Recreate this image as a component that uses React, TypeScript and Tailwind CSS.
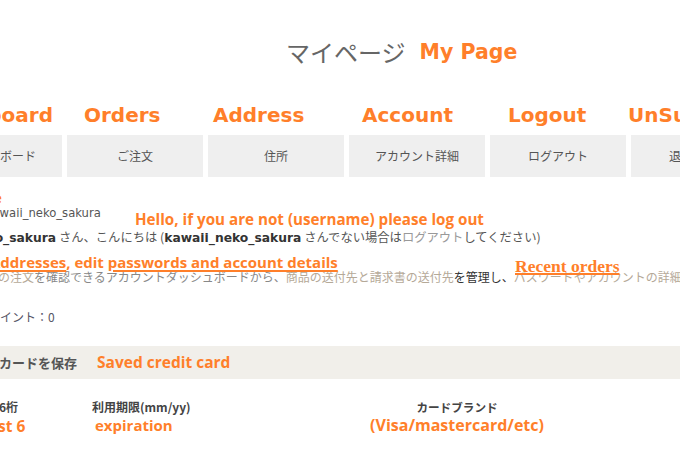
import React from "react";

const tabs = [
  { jp: "ダッシュボード", en: "Dashboard", pad: "pl-[5px]" },
  { jp: "ご注文", en: "Orders", pad: "pl-[17px]" },
  { jp: "住所", en: "Address", pad: "pl-[5px]" },
  { jp: "アカウント詳細", en: "Account", pad: "pl-[13px]" },
  { jp: "ログアウト", en: "Logout", pad: "pl-[18px]" },
  { jp: "退会手続き", en: "UnSubscribe", pad: "pl-0 -ml-[3px]" },
];

const jp = "font-['Noto_Sans_CJK_JP',sans-serif]";
const note = "font-['Open_Sans',sans-serif] font-bold text-[#ff7f2a]";

const App = () => {
  return (
    <div className="relative h-[450px] w-[680px] overflow-hidden bg-white text-[#555]">
      {/* title */}
      <div className="flex h-[90px] items-start pl-[286px] pt-[38px]">
        <span className={`${jp} text-[24px] leading-[28px] text-[#666]`}>マイページ</span>
        <span className="ml-[14px] font-['DejaVu_Sans',sans-serif] text-[20.5px] font-bold leading-[28px] text-[#ff7f2a]">
          My Page
        </span>
      </div>

      {/* tab annotations + tabs */}
      <div className="-ml-[74px] w-[841px]">
        <div className="flex h-[45px] gap-[5px] pt-[13px]">
          {tabs.map((t, i) => (
            <div key={i} className={`w-[136px] shrink-0 whitespace-nowrap ${t.pad}`}>
              <span className="font-['DejaVu_Sans',sans-serif] text-[20px] font-bold leading-[25px] text-[#ff7f2a]">
                {t.en}
              </span>
            </div>
          ))}
        </div>
        <div className="flex h-[42px] gap-[5px]">
          {tabs.map((t, i) => (
            <div
              key={i}
              className={`${jp} flex w-[136px] shrink-0 items-center justify-center bg-[#efefef] text-[12px] text-[#555]`}
            >
              {t.jp}
            </div>
          ))}
        </div>
      </div>

      {/* account dashboard */}
      <div className="relative pt-[12px]">
        <div className={`${note} -ml-[43px] text-[15px] leading-[16px]`}>Name</div>
        <div className="-ml-[14px] whitespace-nowrap font-['DejaVu_Sans',sans-serif] text-[11.6px] leading-[16px] text-[#555]">
          kawaii_neko_sakura
        </div>
        <div className={`${jp} mt-[8px] -ml-[81px] whitespace-nowrap text-[12.3px] leading-[16px] text-[#555]`}>
          <b className="font-['DejaVu_Sans',sans-serif] text-[#333]">kawaii_neko_sakura</b> さん、こんにちは (
          <b className="font-['DejaVu_Sans',sans-serif] text-[#333]">kawaii_neko_sakura</b> さんでない場合は
          <span className="text-[#999]">ログアウト</span>してください)
        </div>
        <div className={`${jp} mt-[23px] -ml-[26px] whitespace-nowrap text-[12px] leading-[16px] text-[#888]`}>
          <span className="text-[#b5a998]">最近の注文</span>を確認できるアカウントダッシュボードから、
          <span className="text-[#b5a998]">商品の送付先と請求書の送付先</span>
          <span className="text-[#333]">を管理し、</span>
          <span className="text-[#b5a998]">パスワードやアカウントの詳細</span>を編集できます。
        </div>
        <div className={`${jp} mt-[24px] -ml-[12px] text-[12px] leading-[16px] text-[#556]`}>ポイント：0</div>

        <div className="mt-[21px] flex h-[33px] items-center bg-[#f1efea]">
          <span className={`${jp} -ml-[66px] whitespace-nowrap text-[13px] font-bold text-[#555]`}>
            クレジットカードを保存
          </span>
          <span className={`${note} ml-[20px] text-[15.5px]`}>Saved credit card</span>
        </div>

        <div className="mt-[20px] flex">
          <div className="-ml-[76px] w-[168px] shrink-0 text-right">
            <div className={`${jp} pr-[74px] text-[12px] font-bold leading-[16px] text-[#444]`}>カード番号下6桁</div>
          </div>
          <div className="w-[260px] shrink-0">
            <div className={`${jp} text-[12px] font-bold leading-[16px] text-[#444]`}>利用期限(mm/yy)</div>
            <div className={`${note} ml-[3px] text-[15px] leading-[20px]`}>expiration</div>
          </div>
          <div className="ml-[15px] w-[180px] shrink-0 text-center">
            <div className={`${jp} text-[11.6px] font-bold leading-[16px] text-[#444]`}>カードブランド</div>
            <div className={`${note} text-[16px] leading-[20px]`}>(Visa/mastercard/etc)</div>
          </div>
        </div>
        <div className={`${note} absolute left-[-20px] top-[239px] text-[15.5px] leading-[20px]`}>Last 6</div>

        {/* overlay annotations */}
        <div className={`${note} absolute left-[135px] top-[32px] whitespace-nowrap text-[15.2px] leading-[20px]`}>
          Hello, if you are not (username) please log out
        </div>
        <div className={`${note} absolute left-[-10px] top-[75px] whitespace-nowrap text-[15px] leading-[20px]`}>
          <span className="underline decoration-2 underline-offset-2">Addresses</span>, edit{" "}
          <span className="underline decoration-2 underline-offset-2">passwords and account details</span>
        </div>
        <div className="absolute left-[515px] top-[79px] whitespace-nowrap font-['Liberation_Serif',serif] text-[17.5px] font-bold leading-[20px] text-[#ff7f2a] underline decoration-2">
          Recent orders
        </div>
      </div>
    </div>
  );
};

export default App;
